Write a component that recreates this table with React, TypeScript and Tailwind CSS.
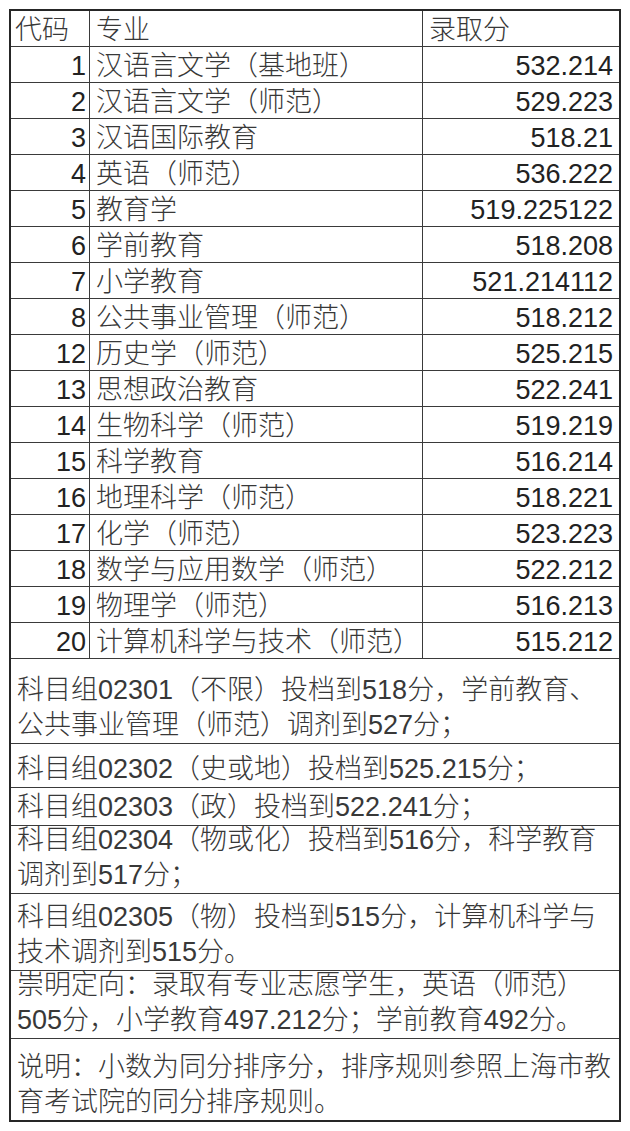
const rows: [string, string, string][] = [
  ["1", "汉语言文学（基地班）", "532.214"],
  ["2", "汉语言文学（师范）", "529.223"],
  ["3", "汉语国际教育", "518.21"],
  ["4", "英语（师范）", "536.222"],
  ["5", "教育学", "519.225122"],
  ["6", "学前教育", "518.208"],
  ["7", "小学教育", "521.214112"],
  ["8", "公共事业管理（师范）", "518.212"],
  ["12", "历史学（师范）", "525.215"],
  ["13", "思想政治教育", "522.241"],
  ["14", "生物科学（师范）", "519.219"],
  ["15", "科学教育", "516.214"],
  ["16", "地理科学（师范）", "518.221"],
  ["17", "化学（师范）", "523.223"],
  ["18", "数学与应用数学（师范）", "522.212"],
  ["19", "物理学（师范）", "516.213"],
  ["20", "计算机科学与技术（师范）", "515.212"],
];

// note rows: fixed heights like the sheet, text sits at the bottom
const notes: { h: string; lines: string[] }[] = [
  {
    h: "h-[85px]",
    lines: ["科目组02301（不限）投档到518分，学前教育、", "公共事业管理（师范）调剂到527分；"],
  },
  { h: "h-[44px]", lines: ["科目组02302（史或地）投档到525.215分；"] },
  { h: "h-[38px]", lines: ["科目组02303（政）投档到522.241分；"] },
  {
    h: "h-[68px]",
    lines: ["科目组02304（物或化）投档到516分，科学教育", "调剂到517分；"],
  },
  {
    h: "h-[77px]",
    lines: ["科目组02305（物）投档到515分，计算机科学与", "技术调剂到515分。"],
  },
  {
    h: "h-[68px]",
    lines: ["崇明定向：录取有专业志愿学生，英语（师范）", "505分，小学教育497.212分；学前教育492分。"],
  },
  {
    h: "h-[81px]",
    lines: ["说明：小数为同分排序分，排序规则参照上海市教", "育考试院的同分排序规则。"],
  },
];

const cell = "h-[36px] border-b border-[#3a3a3a] pt-[2px] leading-[34px] whitespace-nowrap";

export default function App() {
  return (
    <div className="min-h-[1131px] bg-white pl-[9px] pt-[9px] font-['Liberation_Sans','Noto_Sans_CJK_SC',sans-serif] text-[27px] font-light text-[#383838]">
      <div className="w-[612px] border-2 border-[#262626]">
        <div className="grid grid-cols-[79px_333px_196px]">
          <div className={`${cell} border-r pl-[4px]`}>代码</div>
          <div className={`${cell} border-r pl-[6px]`}>专业</div>
          <div className={`${cell} pl-[6px]`}>录取分</div>
          {rows.map(([code, name, score]) => (
            <div key={code} className="contents">
              <div className={`${cell} border-r pr-[3px] text-right text-[#222]`}>{code}</div>
              <div className={`${cell} border-r pl-[6px]`}>{name}</div>
              <div className={`${cell} pr-[6px] text-right text-[#222]`}>{score}</div>
            </div>
          ))}
        </div>
        {notes.map((n, i) => (
          <div
            key={i}
            className={`${n.h} flex flex-col justify-end pl-[6px] leading-[35px] ${
              i < notes.length - 1 ? "border-b border-[#3a3a3a]" : ""
            }`}
          >
            {n.lines.map((l) => (
              <div key={l} className="whitespace-nowrap">
                {l}
              </div>
            ))}
          </div>
        ))}
      </div>
    </div>
  );
}
